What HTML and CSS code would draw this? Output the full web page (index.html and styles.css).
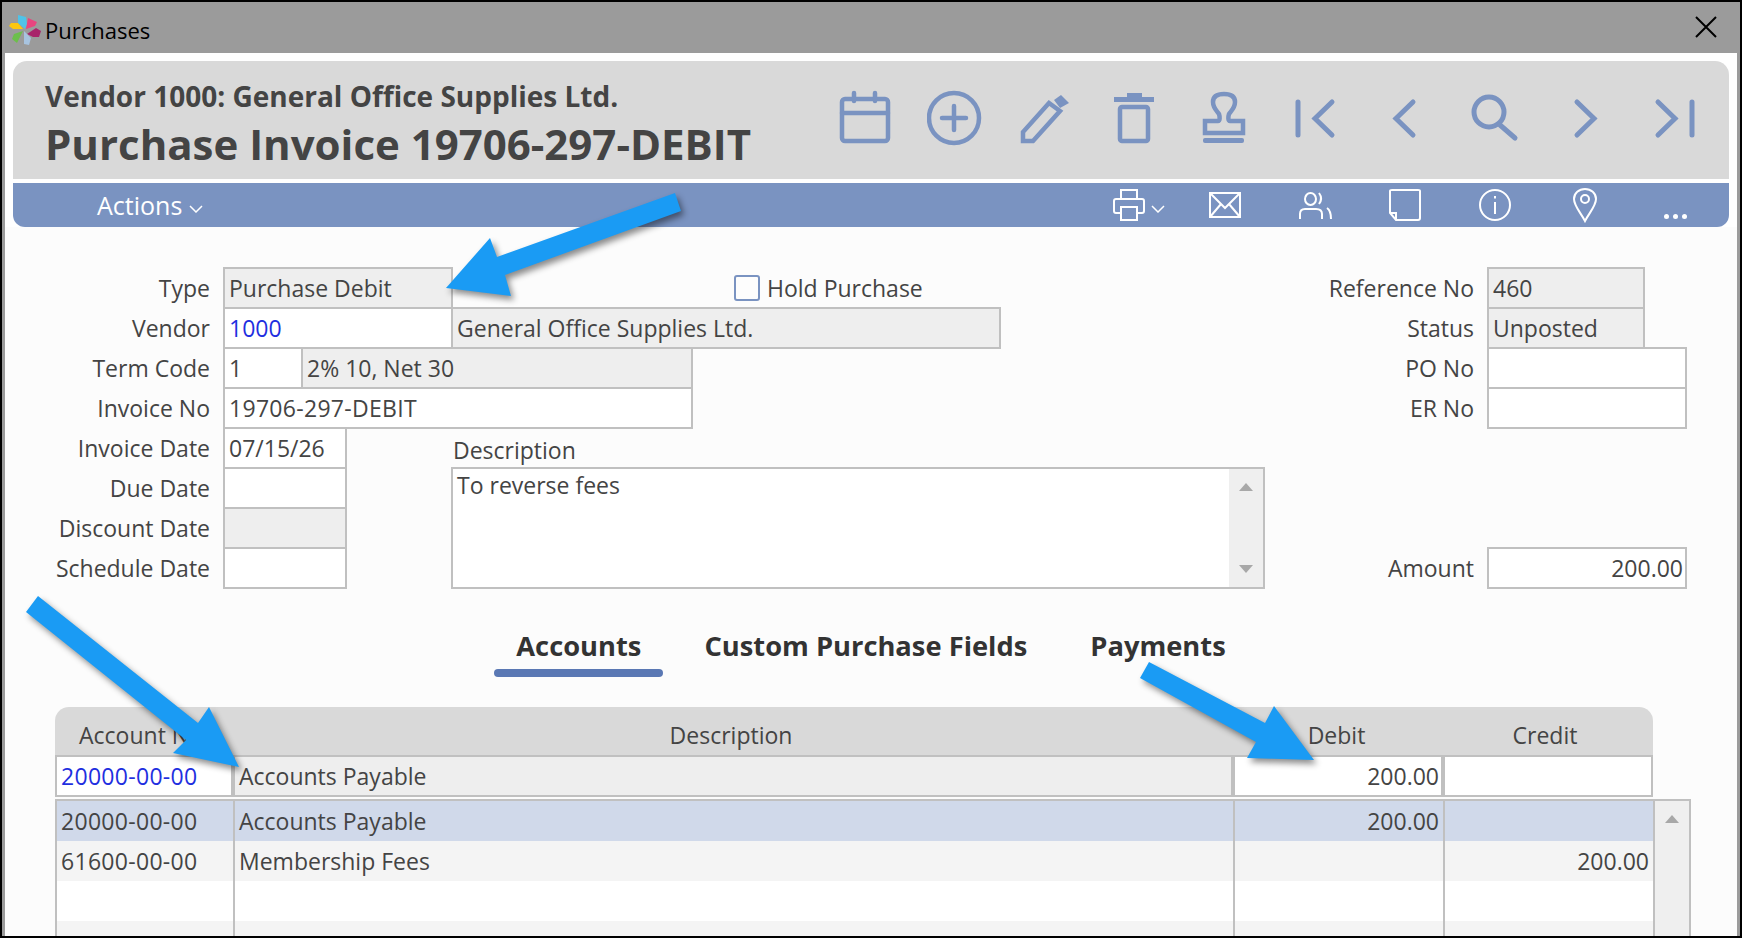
FILE: index.html
```html
<!DOCTYPE html>
<html lang="en">
<head>
    <meta charset="UTF-8">
    <title>Purchases</title>
    <link rel="stylesheet" href="styles.css">
</head>
<body>
    <div class="window">
        <div class="titlebar">
            <svg class="logo" viewBox="9 13 32 32">
                <polygon fill="#4fc3e8" points="18,14 26,16 27,23 25,28 18,22"/>
                <polygon fill="#e8457f" points="26,28 28,17 37,21 35,25"/>
                <polygon fill="#a8246a" points="27,33 36,27 41,30 39,36 33,36"/>
                <polygon fill="#a8c4e0" points="24,30 31,37 29,44 24,43"/>
                <polygon fill="#6cbf4b" points="23,30 17,42 12,38 14,33"/>
                <polygon fill="#fcc70f" points="23,28 13,28 9,25 11,22 18,22"/>
            </svg>
            <span class="titlebar-text">Purchases</span>
            <svg class="close" viewBox="0 0 22 22"><path d="M1 1L21 21M21 1L1 21"/></svg>
        </div>

        <div class="content">
            <div class="header">
                <div class="header-titles">
                    <div class="subtitle">Vendor 1000: General Office Supplies Ltd.</div>
                    <div class="title">Purchase Invoice 19706-297-DEBIT</div>
                </div>
                <div class="tools">
                    <svg viewBox="0 0 56 56"><rect x="5" y="9" width="46" height="42" rx="3"/><path d="M5 23H51M17 3V11M38 3V11"/></svg>
                    <svg viewBox="0 0 56 56"><circle cx="27" cy="28" r="25"/><path d="M15 28H39M27 16V40"/></svg>
                    <svg viewBox="0 0 56 56"><path d="M6 51V42L32 13L43 21L16 51Z"/><polygon class="solid" points="37,10 44,5 52,13 43,18"/></svg>
                    <svg viewBox="0 0 56 56"><rect x="13" y="17" width="28" height="34" rx="2"/><path class="solid" d="M7 7H20V3H35V7H47V12H7Z"/></svg>
                    <svg viewBox="0 0 56 56"><path d="M8 43V31H21C23 31 23 27 22 24C20 21 16 18 16 12C16 6 21 4 27 4C33 4 38 6 38 12C38 18 34 21 32 24C31 27 31 31 33 31H46V43Z"/><rect class="solid" x="6" y="48" width="41" height="5" rx="2"/></svg>
                    <svg class="thick" viewBox="0 0 56 56"><path d="M11 12V45M45 12L28 28.500L45 45"/></svg>
                    <svg class="thick" viewBox="0 0 56 56"><path d="M36 12L19 28.500L36 45"/></svg>
                    <svg class="thick" viewBox="0 0 56 56"><circle cx="22" cy="22" r="15"/><path d="M33 35L48 48"/></svg>
                    <svg class="thick" viewBox="0 0 56 56"><path d="M20 12L37 28.500L20 45"/></svg>
                    <svg class="thick" viewBox="0 0 56 56"><path d="M11 12L28 28.500L11 45M45 12V45"/></svg>
                </div>
            </div>

            <div class="actionbar">
                <div class="actions">Actions
                    <svg class="chevron" viewBox="0 0 14 8"><path d="M1 1L7 7L13 1"/></svg>
                </div>
                <div class="actionbar-icons">
                    <div class="printer">
                        <svg class="bar-icon" viewBox="0 0 36 36"><path d="M10 12V3H26V12M10 26H5C3.500 26 3 25 3 24V14C3 13 3.500 12 5 12H31C32.500 12 33 13 33 14V24C33 25 32.500 26 31 26H26M10 20H26V33H10Z"/></svg>
                        <svg class="chevron" viewBox="0 0 14 8"><path d="M1 1L7 7L13 1"/></svg>
                    </div>
                    <svg class="bar-icon" viewBox="0 0 36 36"><path d="M3 6H33V30H3ZM3 6L18 21L33 6M3 30L14 17M33 30L22 17"/></svg>
                    <svg class="bar-icon" viewBox="0 0 36 36"><ellipse cx="13.500" cy="12" rx="5.500" ry="6"/><path d="M22 6C25 10 25 13 22 17M3 32V27C3 24 5 22 8 22H19C23 22 25 24 25 27V32M30 21C33 23 34 26 34 32"/></svg>
                    <svg class="bar-icon" viewBox="0 0 36 36"><path d="M9 33H31C32 33 33 32 33 31V4C33 3 32 3 31 3H5C4 3 3 3 3 4V26ZM3 26H9V33"/></svg>
                    <svg class="bar-icon" viewBox="0 0 36 36"><circle cx="18" cy="18" r="15"/><path d="M18 15V27M18 9V11.500"/></svg>
                    <svg class="bar-icon" viewBox="0 0 36 36"><path d="M18 34C14 26 7 19 7 12C7 6 12 2 18 2C24 2 29 6 29 12C29 19 22 26 18 34Z"/><circle cx="18" cy="12" r="4"/></svg>
                    <div class="more"><span></span><span></span><span></span></div>
                </div>
            </div>

            <div class="form">
                <div class="label">Type</div>
                <div class="field readonly col-type">Purchase Debit</div>
                <label class="hold"><span class="checkbox"></span>Hold Purchase</label>
                <div class="label label-right">Reference No</div>
                <div class="field readonly col-short">460</div>

                <div class="label">Vendor</div>
                <div class="field col-type link">1000</div>
                <div class="field readonly col-vendor-name">General Office Supplies Ltd.</div>
                <div class="label label-right">Status</div>
                <div class="field readonly col-short">Unposted</div>

                <div class="label">Term Code</div>
                <div class="field col-code">1</div>
                <div class="field readonly col-term-name">2% 10, Net 30</div>
                <div class="label label-right">PO No</div>
                <div class="field col-long"></div>

                <div class="label">Invoice No</div>
                <div class="field col-invoice code">19706-297-DEBIT</div>
                <div class="label label-right">ER No</div>
                <div class="field col-long"></div>

                <div class="label">Invoice Date</div>
                <div class="field col-date">07/15/26</div>
                <div class="desc-label">Description</div>

                <div class="label">Due Date</div>
                <div class="field col-date"></div>
                <div class="textarea">
                    <div class="textarea-text">To reverse fees</div>
                    <div class="scrollbar">
                        <span class="arrow-up"></span>
                        <span class="arrow-down"></span>
                    </div>
                </div>

                <div class="label">Discount Date</div>
                <div class="field readonly col-date"></div>

                <div class="label">Schedule Date</div>
                <div class="field col-date"></div>
                <div class="label label-right">Amount</div>
                <div class="field col-long right">200.00</div>
            </div>

            <div class="tabs">
                <div class="tab active">Accounts</div>
                <div class="tab">Custom Purchase Fields</div>
                <div class="tab">Payments</div>
            </div>

            <div class="grid">
                <div class="grid-head">
                    <div class="head-account">Account No</div>
                    <div>Description</div>
                    <div>Debit</div>
                    <div>Credit</div>
                </div>
                <div class="grid-entry">
                    <div class="field link code">20000-00-00</div>
                    <div class="field readonly">Accounts Payable</div>
                    <div class="field right">200.00</div>
                    <div class="field right"></div>
                </div>
                <div class="grid-list">
                    <div class="grid-rows">
                        <div class="row selected">
                            <div class="code">20000-00-00</div><div>Accounts Payable</div><div class="right">200.00</div><div class="right"></div>
                        </div>
                        <div class="row">
                            <div class="code">61600-00-00</div><div>Membership Fees</div><div class="right"></div><div class="right">200.00</div>
                        </div>
                        <div class="row"><div></div><div></div><div></div><div></div></div>
                        <div class="row"><div></div><div></div><div></div><div></div></div>
                    </div>
                    <div class="grid-scroll"><span class="arrow-up"></span></div>
                </div>
            </div>
        </div>

        <!-- annotation arrows drawn on top of the screenshot -->
        <svg class="arrows" viewBox="0 0 1742 938">
            <polygon points="675,193 681,211 505,275 511,296 446,288 490,238 497,257"/>
            <polygon points="38,596 198,723 209,707 239,767 173,753 186,740 26,612"/>
            <polygon points="1149,662 1265,723 1274,706 1314,760 1247,758 1256,742 1140,678"/>
        </svg>
    </div>
</body>
</html>
```

FILE: styles.css
```css
* {
    box-sizing: border-box;
}
html, body {
    margin: 0;
    height: 100%;
    overflow: hidden;
}
body {
    font-family: "Open Sans", "Noto Sans", sans-serif;
    font-size: 23px;
    color: #444;
}
.window {
    position: relative;
    width: 1742px;
    height: 938px;
    border: 2px solid #000;
    background: #fff;
    overflow: hidden;
    display: flex;
    flex-direction: column;
}

/* title bar */
.titlebar {
    flex: none;
    height: 51px;
    background: #9b9b9b;
    display: flex;
    align-items: center;
    padding: 4px 23px 0 7px;
    color: #000;
}
.logo {
    width: 32px;
    height: 32px;
    margin-right: 4px;
}
.titlebar-text {
    font-size: 22px;
}
.close {
    width: 22px;
    height: 22px;
    margin-left: auto;
    margin-top: -5px;
}
.close path {
    stroke: #000;
    stroke-width: 2;
    fill: none;
}

/* page */
.content {
    flex: 1;
    min-height: 0;
    border-left: 3px solid #9b9b9b;
    border-right: 3px solid #9b9b9b;
    padding-top: 8px;
    background: linear-gradient(#fff 174px, #fcfcfc 174px);
}
.header {
    height: 118px;
    margin: 0 8px;
    background: #d9d9d9;
    border-radius: 14px 14px 0 0;
    display: flex;
    align-items: center;
    padding: 0 26px 4px 32px;
}
.header-titles {
    margin-top: 12px;
    color: #444;
    font-weight: 700;
}
.subtitle {
    font-size: 28px;
    line-height: 40px;
}
.title {
    font-size: 42px;
    line-height: 56px;
}
.tools {
    margin-left: auto;
    display: flex;
    gap: 34px;
}
.tools svg {
    width: 56px;
    height: 56px;
    fill: none;
    stroke: #7a93c1;
    stroke-width: 4.500;
    stroke-linecap: round;
}
.tools svg.thick {
    stroke-width: 5;
}
.tools .solid {
    fill: #7a93c1;
    stroke: none;
}

.actionbar {
    height: 44px;
    margin: 4px 8px 0;
    background: #7a93c1;
    border-radius: 0 0 12px 12px;
    color: #fff;
    display: flex;
    align-items: center;
    padding: 0 36px 0 84px;
}
.actions {
    font-size: 25px;
    display: flex;
    align-items: center;
    gap: 7px;
}
.chevron {
    width: 14px;
    height: 8px;
    margin-top: 7px;
    fill: none;
    stroke: #fff;
    stroke-width: 1.500;
}
.actionbar-icons {
    margin-left: auto;
    display: flex;
    align-items: center;
    gap: 54px;
}
.bar-icon {
    width: 36px;
    height: 36px;
    fill: none;
    stroke: #fff;
    stroke-width: 2;
}
.printer {
    display: flex;
    align-items: center;
    gap: 4px;
    margin-right: -12px;
}
.more {
    width: 36px;
    height: 36px;
    display: flex;
    align-items: flex-end;
    justify-content: center;
    gap: 4px;
    padding-bottom: 4px;
}
.more span {
    width: 5px;
    height: 5px;
    border-radius: 50%;
    background: #fff;
}

/* form */
.form {
    margin-top: 40px;
    padding: 0 8px;
    display: grid;
    grid-template-columns: 210px 78px 44px 106px 240px 308px 266px 222px 156px 42px;
    grid-template-rows: repeat(8, 40px);
}
.label, .desc-label {
    display: flex;
    align-items: center;
    justify-content: flex-end;
    padding-right: 13px;
    grid-column: 1;
    height: 42px;
}
.label-right {
    grid-column: 8;
}
.field {
    height: 42px;
    margin-right: -2px;
    border: 2px solid #c0c0c0;
    background: #fff;
    padding: 0 4px;
    display: flex;
    align-items: center;
    white-space: nowrap;
    overflow: hidden;
}
.readonly {
    background: #eee;
}
.link {
    color: #1f2fe0;
}
.code {
    letter-spacing: 0.3px;
}
.right {
    justify-content: flex-end;
    text-align: right;
}
.field.right {
    padding-right: 2px;
}
.col-type { grid-column: 2 / 5; }
.col-vendor-name { grid-column: 5 / 7; }
.col-code { grid-column: 2; }
.col-term-name { grid-column: 3 / 6; }
.col-invoice { grid-column: 2 / 6; }
.col-date { grid-column: 2 / 4; }
.col-short { grid-column: 9; }
.col-long { grid-column: 9 / 11; }
.hold {
    grid-column: 6;
    display: flex;
    align-items: center;
    gap: 7px;
    padding-left: 43px;
    height: 42px;
}
.checkbox {
    width: 26px;
    height: 26px;
    border: 2px solid #7a93c1;
    border-radius: 3px;
    background: #fdfdfd;
}
.desc-label {
    grid-column: 5;
    justify-content: flex-start;
    padding: 3px 0 0 2px;
}
.textarea {
    grid-column: 5 / 8;
    grid-row: 6 / 9;
    height: 122px;
    border: 2px solid #c0c0c0;
    background: #fff;
    display: flex;
    justify-content: space-between;
}
.textarea-text {
    padding: 0 4px;
}
.scrollbar {
    width: 34px;
    background: #efefef;
    display: flex;
    flex-direction: column;
    align-items: center;
    justify-content: space-between;
    padding: 14px 0;
}
.arrow-up, .arrow-down {
    width: 0;
    height: 0;
    border-left: 7px solid transparent;
    border-right: 7px solid transparent;
}
.arrow-up {
    border-bottom: 8px solid #a8a8a8;
}
.arrow-down {
    border-top: 8px solid #a8a8a8;
}

/* tabs */
.tabs {
    margin-top: 36px;
    display: flex;
    justify-content: center;
    gap: 19px;
}
.tab {
    padding: 0 22px;
    font-size: 27.3px;
    font-weight: 700;
    line-height: 46px;
    color: #333;
}
.tab::after {
    content: "";
    display: block;
    height: 8px;
    margin: 0 -22px;
    border-radius: 4px;
}
.tab.active::after {
    background: #5a78b4;
}

/* accounts grid */
.grid {
    margin: 30px 0 0 50px;
}
.grid-head {
    width: 1598px;
    height: 48px;
    background: #d9d9d9;
    border-radius: 14px 14px 0 0;
    display: grid;
    grid-template-columns: 178px 996px 215px 202px;
    align-items: center;
    text-align: center;
    padding-top: 8px;
}
.head-account {
    padding-right: 6px;
}
.grid-entry {
    width: 1598px;
    display: grid;
    grid-template-columns: 178px 1000px 210px 210px;
}
.grid-entry .field {
    padding: 0 2px 0 4px;
    margin-right: 0;
}
.grid-list {
    width: 1636px;
    margin-top: 2px;
    border: 2px solid #c0c0c0;
    border-bottom: 0;
    display: flex;
    background: #fff;
}
.grid-rows {
    width: 1598px;
}
.row {
    height: 40px;
    display: grid;
    grid-template-columns: 178px 1000px 210px 210px;
}
.row > div {
    border-right: 2px solid #c0c0c0;
    padding: 0 4px;
    display: flex;
    align-items: center;
}
.row:nth-child(even) {
    background: #f4f4f4;
}
.row.selected {
    background: #d0d9ea;
}
.grid-scroll {
    flex: 1;
    background: #efefef;
    display: flex;
    justify-content: center;
    padding-top: 14px;
}

/* annotation */
.arrows {
    position: absolute;
    left: -2px;
    top: -2px;
    width: 1742px;
    height: 938px;
    pointer-events: none;
    filter: drop-shadow(3px 4px 3px rgba(0, 0, 0, 0.45));
}
.arrows polygon {
    fill: #1a9bf4;
}
```
